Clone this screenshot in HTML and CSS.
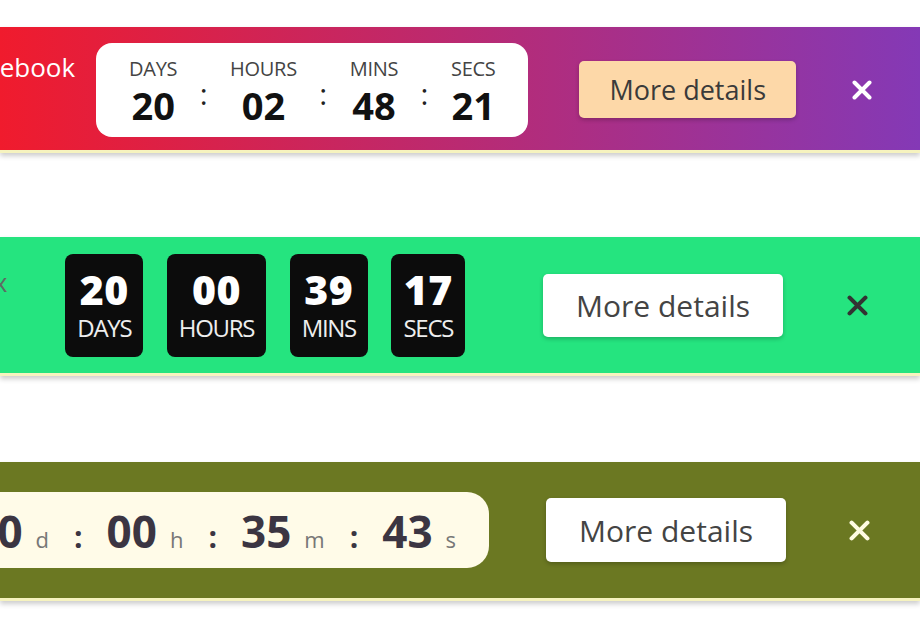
FILE: index.html
```html
<!DOCTYPE html>
<html lang="en">
<head>
    <meta charset="UTF-8">
    <title>Countdown Bars</title>
    <link rel="stylesheet" href="styles.css">
</head>
<body>
    <div class="page">

    <!-- gradient bar, white card timer -->
    <div class="bar bar-sunset">
        <div class="bar-title">Black Friday on Facebook</div>
        <div class="timer-card">
            <div class="timer-unit"><span class="timer-label">DAYS</span><span class="timer-num">20</span></div>
            <span class="timer-sep">:</span>
            <div class="timer-unit"><span class="timer-label">HOURS</span><span class="timer-num">02</span></div>
            <span class="timer-sep">:</span>
            <div class="timer-unit"><span class="timer-label">MINS</span><span class="timer-num">48</span></div>
            <span class="timer-sep">:</span>
            <div class="timer-unit"><span class="timer-label">SECS</span><span class="timer-num">21</span></div>
        </div>
        <button class="btn-details">More details</button>
        <button class="btn-close" aria-label="Close">
            <svg width="20" height="20" viewBox="0 0 20 20"><path d="M2.5 2.5L17.5 17.5M17.5 2.5L2.5 17.5"/></svg>
        </button>
    </div>

    <!-- green bar, black tiles -->
    <div class="bar bar-mint">
        <div class="bar-title">Deals end soon on Xbox</div>
        <div class="tiles">
            <div class="tile"><span class="tile-num">20</span><span class="tile-label">DAYS</span></div>
            <div class="tile"><span class="tile-num">00</span><span class="tile-label">HOURS</span></div>
            <div class="tile"><span class="tile-num">39</span><span class="tile-label">MINS</span></div>
            <div class="tile"><span class="tile-num">17</span><span class="tile-label">SECS</span></div>
        </div>
        <button class="btn-details">More details</button>
        <button class="btn-close" aria-label="Close">
            <svg width="21" height="21" viewBox="0 0 20 20"><path d="M2.5 2.5L17.5 17.5M17.5 2.5L2.5 17.5"/></svg>
        </button>
    </div>

    <!-- olive bar, cream pill -->
    <div class="bar bar-olive">
        <div class="pill">
            <span class="pill-num">20</span><span class="pill-unit">d</span>
            <span class="pill-sep">:</span>
            <span class="pill-num">00</span><span class="pill-unit">h</span>
            <span class="pill-sep">:</span>
            <span class="pill-num">35</span><span class="pill-unit">m</span>
            <span class="pill-sep">:</span>
            <span class="pill-num">43</span><span class="pill-unit">s</span>
        </div>
        <button class="btn-details">More details</button>
        <button class="btn-close" aria-label="Close">
            <svg width="21" height="21" viewBox="0 0 20 20"><path d="M2.5 2.5L17.5 17.5M17.5 2.5L2.5 17.5"/></svg>
        </button>
    </div>

    </div>
</body>
</html>
```

FILE: styles.css
```css
:root {
    --bar-edge: #f6f3bf;
    --btn-text: #444;
}

body {
    margin: 0;
    background: #fff;
    font-family: 'Open Sans', 'Noto Sans', sans-serif;
}

.page {
    overflow: hidden;
    padding: 27px 0 40px;
}

.bar {
    display: flex;
    align-items: center;
    justify-content: flex-end;
    box-sizing: border-box;
    border-bottom: 3px solid var(--bar-edge);
    box-shadow: 0 3px 5px rgba(0, 0, 0, 0.2);
}
.bar > * {
    flex-shrink: 0;
}

.bar-title {
    align-self: flex-start;
    white-space: nowrap;
    font-size: 26px;
}

button {
    font-family: inherit;
    border: none;
    cursor: pointer;
}

.btn-details {
    display: inline-flex;
    align-items: center;
    border-radius: 5px;
    background: #fff;
    color: var(--btn-text);
    box-shadow: 0 2px 4px rgba(0, 0, 0, 0.22);
}

.btn-close {
    display: flex;
    padding: 0;
    background: none;
}
.btn-close svg {
    fill: none;
    stroke: currentColor;
    stroke-width: 4;
    stroke-linecap: round;
}

/* bar 1 */
.bar-sunset {
    height: 126px;
    padding: 2px 48px 0 0;
    background: linear-gradient(90deg, #f01b2d, #8439b6);
}
.bar-sunset .bar-title {
    margin: 20px 21px 0 0;
    color: #fff;
}
.bar-sunset .btn-details {
    height: 57px;
    padding: 0 30px;
    margin-right: 56px;
    background: #fdd8a8;
    color: #3a3a3a;
    font-size: 27px;
}
.bar-sunset .btn-close {
    color: #fff;
}

.timer-card {
    display: flex;
    align-items: center;
    gap: 22.5px;
    margin-right: 51px;
    padding: 16px 33px 13px;
    background: #fff;
    border-radius: 16px;
}
.timer-unit {
    display: flex;
    flex-direction: column;
    align-items: center;
}
.timer-label {
    font-size: 20px;
    line-height: 19px;
    letter-spacing: -0.3px;
    color: #444;
    margin-bottom: 8px;
}
.timer-num {
    font-size: 38px;
    line-height: 38px;
    font-weight: 700;
    color: #111;
}
.timer-sep {
    font-size: 30px;
    line-height: 30px;
    margin-top: 5px;
    color: #222;
}

/* bar 2 */
.bar-mint {
    height: 139px;
    margin-top: 84px;
    padding-right: 52px;
    background: #25e47f;
}
.bar-mint .bar-title {
    margin: 27px 58px 0 0;
    color: #5d6b63;
}
.bar-mint .btn-details,
.bar-olive .btn-details {
    height: 63px;
    padding: 0 33px;
    font-size: 30px;
}
.bar-mint .btn-details {
    margin-right: 64px;
}
.bar-mint .btn-close {
    color: #333;
}

.tiles {
    display: flex;
    gap: 23.5px;
    margin-right: 78px;
}
.tile {
    display: flex;
    flex-direction: column;
    align-items: center;
    padding: 15px 12px 17px;
    background: #0c0c0c;
    border-radius: 8px;
    color: #fff;
}
.tile-num {
    font-size: 41px;
    line-height: 41px;
    font-weight: 800;
    letter-spacing: 0.5px;
}
.tile-label {
    margin-top: 6px;
    font-size: 24px;
    line-height: 24px;
    letter-spacing: -1.3px;
    color: #eee;
}

/* bar 3 */
.bar-olive {
    height: 139px;
    margin-top: 86px;
    padding-right: 50px;
    background: #6b7822;
}
.bar-olive .btn-details {
    height: 64px;
    margin-right: 63px;
}
.bar-olive .btn-close {
    color: #fffbe2;
}

.pill {
    display: flex;
    align-items: baseline;
    box-sizing: border-box;
    height: 76px;
    margin-right: 57px;
    padding: 17px 33px 0;
    background: #fffbe8;
    border-radius: 22px;
}
.pill-num {
    font-size: 44px;
    line-height: 44px;
    font-weight: 700;
    color: #3b3542;
}
.pill-unit {
    margin-left: 13px;
    font-size: 22px;
    line-height: 18px;
    color: #777;
}
.pill-sep {
    margin: 0 24px 0 25px;
    font-size: 30px;
    line-height: 30px;
    font-weight: 700;
    color: #3b3542;
}
```
